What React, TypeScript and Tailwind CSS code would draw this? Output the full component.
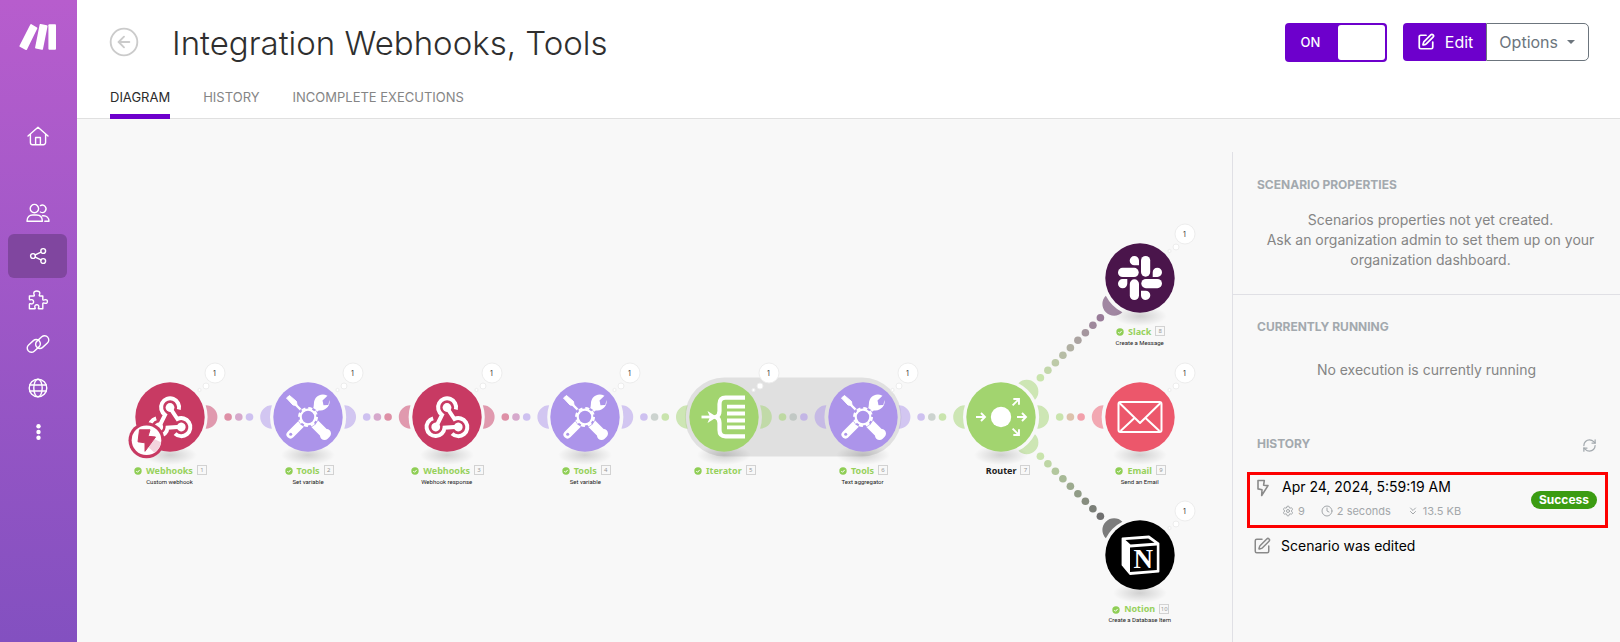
import React from 'react';
import { ChevronsDown, CircleArrowLeft, Clock, RefreshCw, Settings, SquarePen } from 'lucide-react';

const SANS = "font-['Inter',sans-serif]";

/* ---------- Sidebar ---------- */

function NavIcon({ children }: { children: React.ReactNode }) {
  return (
    <svg
      viewBox="-12 -12 24 24"
      className="size-6"
      fill="none"
      stroke="white"
      strokeWidth="1.4"
      strokeLinecap="round"
      strokeLinejoin="round"
      aria-hidden="true"
    >
      {children}
    </svg>
  );
}

const navItems = [
  {
    label: 'Team',
    icon: (
      <>
        <circle cx="-3.6" cy="-3.4" r="4.2" />
        <path d="M-11 9.300C-11 5-8.500 3-5.500 3h4C2 3 4.400 5 4.400 9.300z" />
        <path d="M2.400-6.400a3.700 3.700 0 1 1 0 6.400M4.500 3.700h1C8.500 3.700 11 5.800 11 9.300H6.800" />
      </>
    ),
  },
  {
    label: 'Scenarios',
    active: true,
    icon: (
      <>
        <circle cx="-5" cy="0" r="2.4" />
        <circle cx="5.200" cy="-5" r="2.4" />
        <circle cx="5.200" cy="5" r="2.4" />
        <path d="M-2.800-1.100L3-3.900M-2.800 1.100L3 3.900" />
      </>
    ),
  },
  {
    label: 'Templates',
    icon: (
      <path d="M-8.600-4h4.200c1.400 0 .4-1.300.2-2.600C-4.400-8-3-9-1.200-9S2-8 1.800-6.600C1.600-5.300.6-4 2-4h2.800v3.400c0 1.400 1.400.5 2.600.3C8.600-.5 9.400.3 9.400 1.500S8.600 3.500 7.400 3.300C6.200 3.100 4.800 2.200 4.800 3.600V8.800H.9c-1.200 0-.3-.9-.1-1.800C1 5.600.2 4.800-1.200 4.800S-3.400 5.600-3.200 7c.2.900 1.100 1.800-.1 1.800h-5.300V4.400c0-1.300 1-.7 2-.5C-5.200 4.100-4.400 3-4.400 1.800S-5.200-.6-6.600-.4c-1 .2-2 .8-2-.5z" />
    ),
  },
  {
    label: 'Connections',
    icon: (
      <>
        <rect x="-7.400" y="-4.200" width="14.800" height="8.400" rx="4.200" transform="translate(-4.200 1.900) rotate(-42)" />
        <rect x="-7.400" y="-4.200" width="14.800" height="8.400" rx="4.200" transform="translate(4.200 -1.900) rotate(-42)" />
      </>
    ),
  },
  {
    label: 'Webhooks',
    icon: (
      <>
        <circle r="8.8" />
        <ellipse rx="4.200" ry="8.800" />
        <path d="M-8.300-3H8.300M-8.300 3H8.300" />
      </>
    ),
  },
  {
    label: 'More',
    icon: (
      <g fill="white" stroke="none">
        <circle cx=".5" cy="-5.700" r="2.200" />
        <circle cx=".5" cy="0" r="2.200" />
        <circle cx=".5" cy="5.700" r="2.200" />
      </g>
    ),
  },
];

function Sidebar() {
  return (
    <nav
      aria-label="Main"
      className="flex w-[77px] shrink-0 flex-col items-center bg-linear-to-b from-[#b75dcd] to-[#8350c0] pt-6 pr-0.5"
    >
      <a href="#" aria-label="Make">
        <svg viewBox="0 0 38 27" className="h-[27px] w-[38px]" fill="white" aria-hidden="true">
          <path d="M12.500.2L18 3.400a1 1 0 0 1 .3 1L8 25.500a1 1 0 0 1-1.200.5L.8 22.800a1 1 0 0 1-.3-1.100L11.300.6a1 1 0 0 1 1.200-.4z" />
          <path d="M21.800 0l6 1.300a1 1 0 0 1 .7 1.100L24 25a1 1 0 0 1-1.200.8l-6-1.200a1 1 0 0 1-.7-1.200L20.600.7A1 1 0 0 1 21.800 0z" />
          <rect x="29.400" y="0.300" width="7.600" height="25.400" rx="0.900" />
        </svg>
      </a>
      <a href="#" aria-label="Home" className="mt-[63px] flex h-11 w-[59px] items-center justify-center">
        <NavIcon>
          <path d="M-10 0L0-8.800 10 0M-7.600-1.800V6.500a2.200 2.200 0 0 0 2.200 2.200H5.400A2.200 2.200 0 0 0 7.600 6.500V-1.800M-2.400 8.500V1.500h4.800v7" />
        </NavIcon>
      </a>
      <div className="mt-8 flex flex-col">
        {navItems.map((item) => (
          <a
            key={item.label}
            href="#"
            aria-label={item.label}
            className={
              item.active
                ? 'flex h-11 w-[59px] items-center justify-center rounded-md bg-[#80469f]'
                : 'flex h-11 w-[59px] items-center justify-center rounded-md'
            }
          >
            <NavIcon>{item.icon}</NavIcon>
          </a>
        ))}
      </div>
    </nav>
  );
}

/* ---------- Header ---------- */

function Header() {
  return (
    <header className="border-b border-[#e0e0e0] bg-white pr-[31px] pl-[33px]">
      <div className="flex h-[84px] items-center">
        <button type="button" aria-label="Back" className="text-[#cbcbcb]">
          <CircleArrowLeft size={32} strokeWidth={1.4} className="-ml-0.5" />
        </button>
        <h1 className="ml-8 flex-1 pt-0.5 text-[33px] leading-10 font-light text-[#2f2f2f]">
          Integration Webhooks, Tools
        </h1>
        <label className="flex h-[39px] w-[102px] cursor-pointer items-center rounded-[4px] bg-[#6d00cc] p-0.5 text-white">
          <input type="checkbox" defaultChecked aria-label="Scenario on" className="sr-only" />
          <span className="flex-1 pt-px pr-1 text-center text-[13px] font-medium">ON</span>
          <span className="h-full w-[47px] rounded-[3px] bg-white" />
        </label>
        <div className="ml-4 flex h-[38px] text-base">
          <button type="button" className="flex items-center gap-2.5 rounded-l-[4px] bg-[#6d00cc] pr-[13px] pl-3.5 text-white">
            <SquarePen size={18} strokeWidth={2.300} />
            Edit
          </button>
          <button
            type="button"
            className="flex items-center gap-2 rounded-r-[5px] border border-[#6c757d] px-3 text-[#6c757d]"
          >
            Options
            <svg viewBox="0 0 10 6" className="h-1.5 w-2.5" aria-hidden="true">
              <path d="M1 1h8L5 5z" fill="currentColor" />
            </svg>
          </button>
        </div>
      </div>
      <div className="-mb-px flex gap-[33px] text-[13px] text-[#858585]">
        <a href="#" className="border-b-[5px] border-[#6d00cc] pt-1 pb-1.5 text-[#2b2b2b]">
          DIAGRAM
        </a>
        <a href="#" className="pt-1">
          HISTORY
        </a>
        <a href="#" className="pt-1">
          INCOMPLETE EXECUTIONS
        </a>
      </div>
    </header>
  );
}

/* ---------- Diagram ---------- */

type Kind = 'webhook' | 'tools' | 'iterator' | 'router' | 'slack' | 'email' | 'notion';

const COLORS: Record<Kind, string> = {
  webhook: '#c83a63',
  tools: '#ac94ea',
  iterator: '#a2d46f',
  router: '#a2d46f',
  slack: '#4a154b',
  email: '#ec576b',
  notion: '#000000',
};

interface FlowNode {
  id: number;
  kind: Kind;
  x: number;
  y: number;
  name: string;
  detail?: string;
  trigger?: boolean;
}

const X0 = 92.5;
const STEP = 138.6;
const MID = 298;

const nodes: FlowNode[] = [
  { id: 1, kind: 'webhook', x: X0, y: MID, name: 'Webhooks', detail: 'Custom webhook', trigger: true },
  { id: 2, kind: 'tools', x: X0 + STEP, y: MID, name: 'Tools', detail: 'Set variable' },
  { id: 3, kind: 'webhook', x: X0 + STEP * 2, y: MID, name: 'Webhooks', detail: 'Webhook response' },
  { id: 4, kind: 'tools', x: X0 + STEP * 3, y: MID, name: 'Tools', detail: 'Set variable' },
  { id: 5, kind: 'iterator', x: X0 + STEP * 4, y: MID, name: 'Iterator' },
  { id: 6, kind: 'tools', x: X0 + STEP * 5, y: MID, name: 'Tools', detail: 'Text aggregator' },
  { id: 7, kind: 'router', x: X0 + STEP * 6, y: MID, name: 'Router' },
  { id: 8, kind: 'slack', x: X0 + STEP * 7, y: MID - STEP, name: 'Slack', detail: 'Create a Message' },
  { id: 9, kind: 'email', x: X0 + STEP * 7, y: MID, name: 'Email', detail: 'Send an Email' },
  { id: 10, kind: 'notion', x: X0 + STEP * 7, y: MID + STEP, name: 'Notion', detail: 'Create a Database Item' },
];

const links: [number, number][] = [
  [1, 2],
  [2, 3],
  [3, 4],
  [4, 5],
  [5, 6],
  [6, 7],
  [7, 8],
  [7, 9],
  [7, 10],
];

function mix(a: string, b: string, t: number) {
  const channel = (hex: string, i: number) => parseInt(hex.slice(1 + i * 2, 3 + i * 2), 16);
  const parts = [0, 1, 2].map((i) => Math.round(channel(a, i) * (1 - t) + channel(b, i) * t));
  return `rgb(${parts.join(',')})`;
}

function Lobe({ x, y, angle, color }: { x: number; y: number; angle: number; color: string }) {
  return (
    <path
      d="M36.200-11.700A11.700 11.700 0 1 1 36.200 11.700A38 38 0 0 0 36.200-11.700z"
      transform={`translate(${x} ${y}) rotate(${angle})`}
      fill={color}
      opacity="0.5"
    />
  );
}

function Link({ from, to }: { from: FlowNode; to: FlowNode }) {
  const a = COLORS[from.kind];
  const b = COLORS[to.kind];
  const dx = to.x - from.x;
  const dy = to.y - from.y;
  const angle = (Math.atan2(dy, dx) * 180) / Math.PI;
  const diagonal = dy !== 0;
  const count = diagonal ? 9 : 3;
  const start = diagonal ? 39.3 : 58.6;
  const gap = (dx - start * 2) / (count - 1);
  return (
    <g>
      <Lobe x={from.x} y={from.y} angle={angle} color={a} />
      <Lobe x={to.x} y={to.y} angle={angle + 180} color={b} />
      {Array.from({ length: count }, (_, i) => {
        const d = start + gap * i;
        return (
          <circle
            key={i}
            cx={from.x + d}
            cy={from.y + Math.sign(dy) * d}
            r="3.800"
            fill={mix(a, b, i / (count - 1))}
            opacity="0.550"
          />
        );
      })}
    </g>
  );
}

function Glyph({ kind }: { kind: Kind }) {
  const c = COLORS[kind];
  if (kind === 'webhook') {
    return (
      <g stroke="white" fill="none" strokeWidth="4">
        {[0, 120, 240].map((r) => (
          <g key={r} transform={`rotate(${r} 0 3.500)`}>
            <path d="M-11 10L-5-2.200A9 9 0 1 1 8.800-7.400" />
            <circle cx="0" cy="-9.500" r="4.400" fill="white" stroke="none" />
          </g>
        ))}
      </g>
    );
  }
  if (kind === 'tools') {
    return (
      <g>
        <path d="M-13-13L0 0" stroke="white" strokeWidth="2.400" />
        <path d="M-21.500-19L-18.500-21.500-11.500-15.500-11-11.500-15-12z" fill="white" stroke="white" strokeLinejoin="round" />
        <path d="M0 0L11-11" stroke="white" strokeWidth="5.500" />
        <path
          d="M19.500-21.200L14.500-16.500 15.500-11.800 20.300-12 21.500-17A9 9 0 0 1 12.500-6.600L8.500-6.500 5.500-9.500 5.900-13A9 9 0 0 1 17-22.300z"
          fill="white"
        />
        <path d="M-17.500 17.500L-4 4" stroke="white" strokeWidth="8" strokeLinecap="round" />
        <path d="M4 4L18.500 18.500" stroke="white" strokeWidth="9.500" />
        <path d="M16.500 18.500L18.500 16.500" stroke="white" strokeWidth="9" strokeLinecap="round" />
        <circle cx="-17.300" cy="17.300" r="1.500" fill={c} />
        <circle r="10.500" fill={c} />
        <circle r="8.500" fill="none" stroke="white" strokeWidth="3" strokeDasharray="3.900 2.780" />
        <circle r="7.300" fill="none" stroke="white" strokeWidth="2.200" />
      </g>
    );
  }
  if (kind === 'iterator') {
    return (
      <g stroke="white" fill="none">
        <path d="M21-19.300H1.500Q-4.500-19.300-4.500-13V-6Q-4.500-1.500-8 0-4.500 1.500-4.500 6v7Q-4.500 19.300 1.500 19.300H21" strokeWidth="4.200" />
        <path d="M3-10.300H21M3-3.500H21M3 3.500H21M3 10.300H21" strokeWidth="3.800" />
        <path d="M-22.500 0H-9" strokeWidth="2.800" />
        <path d="M-16.500-6L-7 0-16.500 6-14 0z" fill="white" stroke="none" />
      </g>
    );
  }
  if (kind === 'router') {
    const arrow = 'M-4.500 0H4.500M.5-4L4.500 0 .5 4';
    return (
      <g stroke="white" fill="none" strokeWidth="1.900">
        <circle r="10.200" fill="white" stroke="none" />
        <path d={arrow} transform="translate(-20.500 0)" />
        <path d={arrow} transform="translate(20.500 0)" />
        <path d={arrow} transform="translate(14.800 -14.800) rotate(-45)" />
        <path d={arrow} transform="translate(14.800 14.800) rotate(45)" />
      </g>
    );
  }
  if (kind === 'slack') {
    return (
      <g fill="white">
        {[0, 90, 180, 270].map((r) => (
          <g key={r} transform={`rotate(${r})`}>
            <rect x="1" y="-22" width="9.200" height="20.700" rx="4.600" />
            <path d="M-1-12.700H-5.600A4.650 4.650 0 1 1-1-17.400z" />
          </g>
        ))}
      </g>
    );
  }
  if (kind === 'email') {
    return (
      <g stroke="white" fill="none" strokeWidth="2" strokeLinejoin="round">
        <rect x="-21.500" y="-15" width="43" height="30" rx="2" />
        <path d="M-20.500-14L0 6 20.500-14M-19.500 14L-5.500 1M19.500 14L5.500 1" />
      </g>
    );
  }
  return (
    <g>
      <path
        d="M-17.500-16.500L9-18.500 18.500-11.500V16.500L-10 19-17.500 10z"
        fill="white"
        stroke="white"
        strokeWidth="1.800"
        strokeLinejoin="round"
      />
      <path d="M-14.500-15L8.300-16.600 14.500-12.200-9.500-10.500z" fill="black" />
      <path d="M-10-7.500L16.800-9.500V15L-10 17z" fill="black" />
      <text
        x="3.300"
        y="13"
        textAnchor="middle"
        className="font-['Liberation_Serif',serif] text-[27px] font-bold"
        fill="white"
      >
        N
      </text>
    </g>
  );
}

function NodeView({ node }: { node: FlowNode }) {
  const color = COLORS[node.kind];
  const isRouter = node.kind === 'router';
  return (
    <div
      className="absolute flex w-32 flex-col items-center"
      style={{ left: node.x - 64, top: node.y - 60 }}
    >
      <svg viewBox="-64 -60 128 108" className="h-[108px] w-32" aria-hidden="true">
        <ellipse cx="0" cy="38" rx="27" ry="10" fill="url(#node-shadow)" />
        <circle r="34.700" fill={color} />
        <Glyph kind={node.kind} />
        {node.trigger && (
          <g transform="translate(-23.500 23.300)">
            <circle r="18" fill={color} />
            <circle r="14.800" fill="white" />
            <path d="M4-3L14.500 2A14.800 14.800 0 0 1 8 12.500L2 7z" fill="#f3d3dd" />
            <path d="M-7-10.500H3.500L1.500-4 9-3.300-1.500 11-1.500 2.500-8.500 1.500z" fill={color} stroke={color} strokeLinejoin="round" />
          </g>
        )}
        {!isRouter && (
          <g fill="white" stroke="#ededed">
            <circle cx="45" cy="-44" r="10" />
            <circle cx="36" cy="-31" r="3" />
            <circle cx="29.500" cy="-27" r="1.600" />
            <text x="44.500" y="-41.500" textAnchor="middle" fill="#333333" stroke="none" className="text-[7px]">
              1
            </text>
          </g>
        )}
      </svg>
      <div className="grid grid-cols-[1fr_auto_1fr] items-center gap-x-1 font-['Noto_Sans',sans-serif] text-[9px] leading-[11px] font-bold text-[#97d15c]">
        <span className="flex justify-end">
          {!isRouter && (
            <svg viewBox="0 0 8 8" className="mt-0.5 size-2" aria-hidden="true">
              <circle cx="4" cy="4" r="3.700" fill="#8fce55" />
              <path d="M2.300 4.100l1.200 1.200 2.200-2.400" fill="none" stroke="white" />
            </svg>
          )}
        </span>
        <span className={isRouter ? 'text-[#222222]' : undefined}>{node.name}</span>
        <span className="flex">
          <span className="flex h-2.5 min-w-2.5 items-center justify-center border border-[#d2d2d2] text-[6px] leading-none font-normal text-[#999999]">
            {node.id}
          </span>
        </span>
      </div>
      {node.detail && (
        <div className="pt-0.5 font-['Roboto',sans-serif] text-[6px] leading-2 whitespace-nowrap text-[#222222]">
          {node.detail}
        </div>
      )}
    </div>
  );
}

function Diagram() {
  const byId = (id: number) => nodes.find((n) => n.id === id)!;
  return (
    <section aria-label="Diagram" className="relative min-w-0 flex-1 overflow-hidden">
      <svg className="absolute inset-0 size-full" aria-hidden="true">
        <defs>
          <radialGradient id="node-shadow">
            <stop offset="0" stopColor="#000" stopOpacity="0.160" />
            <stop offset="1" stopColor="#000" stopOpacity="0" />
          </radialGradient>
        </defs>
        <rect
          x={byId(5).x - 39}
          y={MID - 39.5}
          width={STEP + 78}
          height="79"
          rx="39.500"
          fill="#e0e0e0"
        />
        {links.map(([a, b]) => (
          <Link key={`${a}-${b}`} from={byId(a)} to={byId(b)} />
        ))}
      </svg>
      {nodes.map((n) => (
        <NodeView key={n.id} node={n} />
      ))}
    </section>
  );
}

/* ---------- Side panel ---------- */

function SidePanel() {
  return (
    <aside className="mt-[33px] w-[388px] shrink-0 border-l border-[#e0e0e5] text-sm text-[#858585]">
      <section className="border-b border-[#e0e0e5] px-6 pt-[25px] pb-6">
        <h2 className="text-xs leading-4 font-bold text-[#a3a9ae]">SCENARIO PROPERTIES</h2>
        <p className="pt-[17px] pl-2 text-center leading-5">
          Scenarios properties not yet created.
          <br />
          Ask an organization admin to set them up on your organization dashboard.
        </p>
      </section>
      <section className="px-6 pt-6">
        <h2 className="text-xs leading-4 font-bold text-[#a3a9ae]">CURRENTLY RUNNING</h2>
        <p className="pt-[25px] text-center leading-5">No execution is currently running</p>
      </section>
      <section className="pt-14">
        <div className="flex items-center justify-between pr-[23px] pl-6">
          <h2 className="text-xs leading-4 font-bold text-[#a3a9ae]">HISTORY</h2>
          <button type="button" aria-label="Refresh" className="pt-0.5 text-[#a3a9ae]">
            <RefreshCw size={15} />
          </button>
        </div>
        <ul className="mt-[19px] mr-3 ml-3.5 text-black">
          <li className="flex items-center border-[3px] border-[#fd0000] pr-2 pl-1.5">
            <svg
              viewBox="0 0 14 18"
              className="mt-1 h-[18px] w-3.5 self-start"
              fill="none"
              stroke="#8a8a8a"
              strokeWidth="1.600"
              strokeLinejoin="round"
              aria-hidden="true"
            >
              <path d="M2 1.500H8.300L7.600 6.200 12 6.600 5.700 16.500 6 10.800 2 9.900z" />
            </svg>
            <div className="ml-3 flex-1">
              <div className="leading-6">Apr 24, 2024, 5:59:19 AM</div>
              <div className="flex h-[26px] items-center gap-4 text-[11px] text-[#a3a7aa]">
                <span className="flex items-center gap-1">
                  <Settings size={12} />9
                </span>
                <span className="flex items-center gap-1">
                  <Clock size={12} />2 seconds
                </span>
                <span className="flex items-center gap-1">
                  <ChevronsDown size={12} />
                  13.5 KB
                </span>
              </div>
            </div>
            <span className="rounded-full bg-[#3b9c12] px-2 text-xs leading-[18px] font-bold text-white">Success</span>
          </li>
          <li className="flex items-center gap-2.5 pt-2 pl-1.5">
            <SquarePen size={18} className="text-[#8a8a8a]" />
            <span className="leading-5">Scenario was edited</span>
          </li>
        </ul>
      </section>
    </aside>
  );
}

export default function App() {
  return (
    <div className={`${SANS} flex min-h-screen bg-[#f8f8f8]`}>
      <Sidebar />
      <div className="flex min-w-0 flex-1 flex-col">
        <Header />
        <main className="flex flex-1">
          <Diagram />
          <SidePanel />
        </main>
      </div>
    </div>
  );
}
